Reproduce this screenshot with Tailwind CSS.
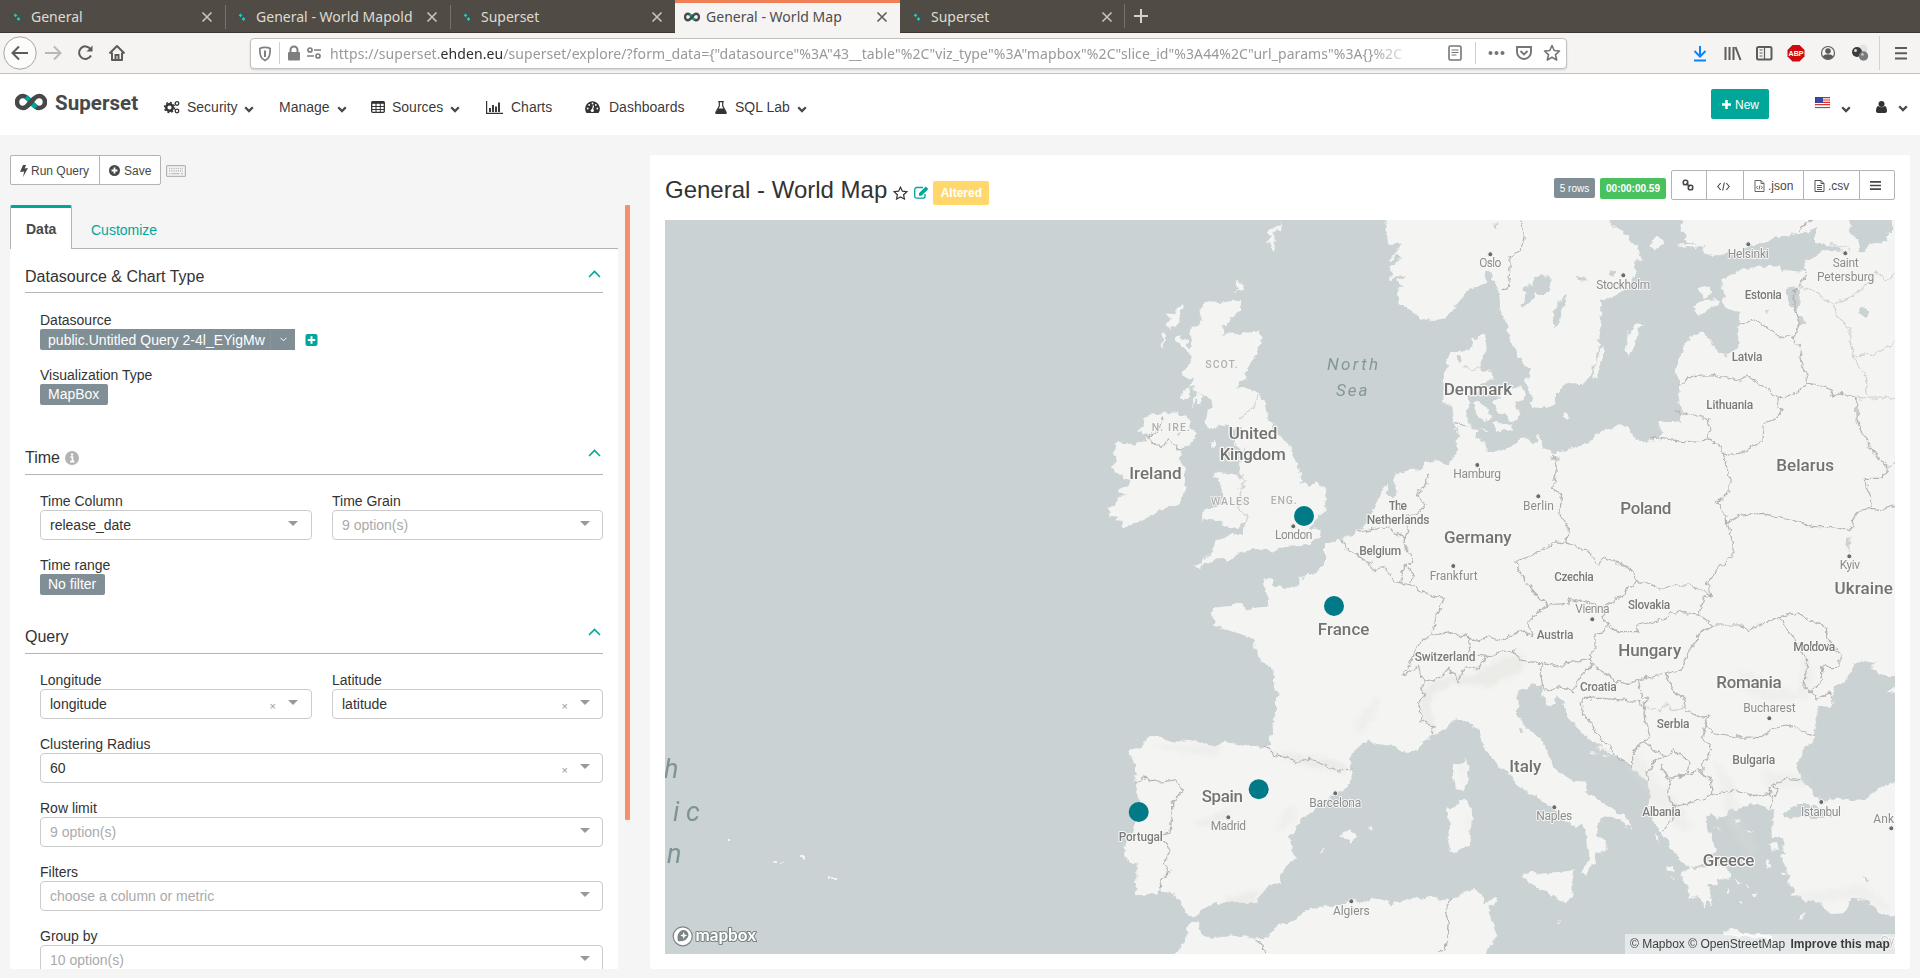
<!DOCTYPE html>
<html lang="en">
<head>
<meta charset="utf-8">
<title>General - World Map</title>
<script src="https://cdn.jsdelivr.net/npm/@tailwindcss/browser@4"></script>
</head>
<body class="w-[1920px] h-[978px] overflow-hidden bg-[#f5f5f5] font-['Liberation_Sans',Arial,sans-serif] text-sm leading-5 text-[#333]">
<svg class="hidden">
  <symbol id="caret" viewBox="0 0 10 7"><path d="M1.2 1.2 5 5 8.8 1.2" fill="none" stroke="#484848" stroke-width="2.3"/></symbol>
  <symbol id="up" viewBox="0 0 13 8"><path d="M1 7 6.5 1.4 12 7" fill="none" stroke="#00a699" stroke-width="1.5"/></symbol>
  <symbol id="close" viewBox="0 0 12 12"><path d="M1.5 1.5l9 9M10.500 1.500l-9 9" stroke="currentColor" stroke-width="1.6"/></symbol>
  <symbol id="fav" viewBox="0 0 16 16"><path d="M5 5.500 11 10.500" stroke="#464a46" stroke-width="3"/><path d="M4.500 5.500a2.500 2.500 0 1 0 0 5M11.500 5.500a2.500 2.500 0 1 1 0 5" fill="none" stroke="#484b48" stroke-width="1.500"/><path d="M5.500 5.300l2 2M8.500 9l2 2" stroke="#17d0c4" stroke-width="2.500"/></symbol>
  <symbol id="inf" viewBox="0 0 32 18"><path d="M16 9C12 4 10.500 3 8 3a6 6 0 0 0 0 12c2.500 0 4-1 8-6s5.500-6 8-6a6 6 0 0 1 0 12c-2.500 0-4-1-8-6z" fill="none" stroke="#484848" stroke-width="4.600"/><path d="M11 4l3.500 3M17.500 11l3.700 3.200" stroke="#00a699" stroke-width="4.800"/><path d="M12.500 12.500 19.500 5" stroke="#484848" stroke-width="4.600"/></symbol>
</svg>

<!-- browser tabs -->
<div class="h-[33px] flex bg-[#504c45] border-b border-[#3a3733] font-['Noto_Sans','Open_Sans',sans-serif] text-sm text-[#dfdbd2]">
  <div class="w-[225px] h-8 flex items-center pl-[9px] pr-[12px] pt-[2px]"><svg class="w-4 h-4"><use href="#fav"/></svg><span class="ml-[6px] flex-1">General</span><svg class="w-3 h-3 text-[#c9c5bd]"><use href="#close"/></svg></div>
  <div class="w-[225px] h-8 flex items-center pl-[9px] pr-[12px] pt-[2px] relative"><span class="w-px h-6 bg-[#77736b] absolute left-0 top-[5px]"></span><svg class="w-4 h-4"><use href="#fav"/></svg><span class="ml-[6px] flex-1 whitespace-nowrap tracking-[0.02px]">General - World Mapold</span><svg class="w-3 h-3 text-[#c9c5bd]"><use href="#close"/></svg></div>
  <div class="w-[225px] h-8 flex items-center pl-[9px] pr-[12px] pt-[2px] relative"><span class="w-px h-6 bg-[#77736b] absolute left-0 top-[5px]"></span><svg class="w-4 h-4"><use href="#fav"/></svg><span class="ml-[6px] flex-1">Superset</span><svg class="w-3 h-3 text-[#c9c5bd]"><use href="#close"/></svg></div>
  <div class="w-[225px] h-[33px] flex items-center pl-[9px] pr-[12px] pb-[2px] bg-[#f5f4f2] border-t-[3px] border-[#ef7f55] text-[#4c4c4c]"><svg class="w-4 h-[10px]" viewBox="0 0 32 18" preserveAspectRatio="none"><use href="#inf" width="32" height="18"/></svg><span class="ml-[6px] flex-1 whitespace-nowrap tracking-[0.02px]">General - World Map</span><svg class="w-3 h-3 text-[#5c5c5c]"><use href="#close"/></svg></div>
  <div class="w-[225px] h-8 flex items-center pl-[9px] pr-[12px] pt-[2px]"><svg class="w-4 h-4"><use href="#fav"/></svg><span class="ml-[6px] flex-1">Superset</span><svg class="w-3 h-3 text-[#c9c5bd]"><use href="#close"/></svg></div>
  <div class="flex items-center h-8"><span class="-ml-px w-px h-6 bg-[#77736b]"></span><svg class="ml-[8px] w-4 h-4" viewBox="0 0 16 16"><path d="M8 1v14M1 8h14" stroke="#d5d1c9" stroke-width="2"/></svg></div>
</div>

<!-- browser toolbar -->
<div class="h-[41px] flex items-center bg-[#f5f4f2] border-b border-[#c4c2c0] pl-[3px] pr-[12px]">
  <svg class="w-[130px] h-[36px] shrink-0" viewBox="3 35 130 36" fill="none" stroke="#5c5c5a" stroke-width="2">
    <circle cx="20" cy="53" r="16.200" fill="#fcfcfb" stroke="#a8a6a4" stroke-width="1"/>
    <path d="M28 53H13M19 46.500 12.500 53l6.500 6.500"/>
    <path stroke="#b9b8b6" d="M45 53h15M54 46.500 60.500 53 54 59.500"/>
    <path d="M90.500 49a6.300 6.300 0 1 0 .5 6.500"/><path d="M92.500 45.500v6h-6z" fill="#5c5c5a" stroke="none"/>
    <path d="M109.500 53.500 117 46l7.500 7.500M112 52.500v7.500h10v-7.500" stroke-linejoin="round"/><path d="M115.500 60v-5h3v5" />
  </svg>
  <div class="ml-[117px] w-[1317px] h-[31px] shrink-0 flex items-center bg-white border border-[#c3c1be] rounded-[4px] shadow-[0_1px_2px_rgba(0,0,0,0.15)]">
    <svg class="w-[72px] h-[29px] shrink-0" viewBox="251 39 72 29" fill="none" stroke="#7f7f7d" stroke-width="1.700">
      <path d="M265 47.300c-2.300 0-4 .5-5.200 1.200 0 6 .5 10 5.200 12 4.700-2 5.200-6 5.200-12-1.200-.7-2.900-1.200-5.200-1.200z"/><path d="M265 50.500v6.500" stroke-width="2"/>
      <path d="M279.500 42v22" stroke="#cfcfcf" stroke-width="1"/>
      <path d="M290.500 53v-3a3.500 3.500 0 0 1 7 0v3" stroke-width="2"/><rect x="288" y="52" width="12" height="8.500" rx="1" fill="#7f7f7d" stroke="none"/>
      <circle cx="310" cy="50" r="2"/><path d="M314 50h7M307 56h7"/><circle cx="318" cy="56" r="2"/>
    </svg>
    <div class="ml-[7px] w-[1085px] overflow-hidden whitespace-nowrap font-['Noto_Sans','Open_Sans',sans-serif] text-[14px] tracking-[0.075px] text-[#999] pt-px [mask-image:linear-gradient(to_right,black_96%,transparent)]">https://superset.<span class="text-[#2e2e2e]">ehden.eu</span>/superset/explore/?form_data={"datasource"%3A"43__table"%2C"viz_type"%3A"mapbox"%2C"slice_id"%3A44%2C"url_params"%3A{}%2C</div>
    <svg class="ml-auto w-[120px] h-[29px] shrink-0" viewBox="1446 39 120 29" fill="none" stroke="#757573" stroke-width="1.600">
      <rect x="1449" y="46" width="12" height="14" rx="1.500"/><path d="M1451.500 50h7M1451.500 52.500h7M1451.500 55h5" stroke-width="1.200"/>
      <path d="M1475.500 42v22" stroke="#cfcfcf" stroke-width="1"/>
      <g fill="#757573" stroke="none"><circle cx="1490.500" cy="53" r="2"/><circle cx="1496.500" cy="53" r="2"/><circle cx="1502.500" cy="53" r="2"/></g>
      <path d="M1517 47h14v5a7 7 0 0 1-14 0zM1520.500 51l3.500 3.500 3.500-3.500" stroke-width="1.900"/>
      <path d="M1552 45.500l2.200 5 5.300.5-4 3.700 1.200 5.300-4.700-2.800-4.700 2.800 1.200-5.300-4-3.700 5.300-.5z" stroke-linejoin="round"/>
    </svg>
  </div>
  <svg class="ml-auto w-[220px] h-[36px] shrink-0" viewBox="1688 35 220 36" fill="none" stroke="#5c5c5a" stroke-width="2">
    <path d="M1700 46v10M1694.500 51l5.500 5.500 5.500-5.500M1694 60.500h12" stroke="#0a84ff"/>
    <path d="M1725.500 47v13M1729.500 47v13M1733.500 47v13M1735.500 47l5 13" stroke-width="2"/>
    <rect x="1757" y="47" width="14.500" height="12.500" rx="1.500"/><path d="M1764.500 47v12M1759.500 50h3M1759.500 53h3M1759.500 56h3" stroke-width="1.200"/>
    <path d="M1792.500 45h7l5 5v6.500l-5 5h-7l-5-5V50z" fill="#d00a0a" stroke="none"/><text x="1788.500" y="56.200" font-family="Liberation Sans" font-weight="700" font-size="8" textLength="15" lengthAdjust="spacingAndGlyphs" fill="#fff" stroke="none">ABP</text>
    <circle cx="1828" cy="53" r="6.500" stroke-width="1.200"/><circle cx="1828" cy="51" r="2.800" fill="#5c5c5a" stroke="none"/><path d="M1823 56.500c1-3 9-3 10 0-2 3.500-8 3.500-10 0z" fill="#5c5c5a" stroke="none"/>
    <g stroke="none"><circle cx="1863" cy="49" r="4.500" fill="#e3e3e3"/><circle cx="1857" cy="52" r="5" fill="#3c3c3c"/><circle cx="1855.500" cy="50.500" r="1.500" fill="#ddd"/><circle cx="1863.500" cy="56" r="4.700" fill="#7b7b7b"/><circle cx="1862.500" cy="54.500" r="1.300" fill="#ccc"/></g>
    <path d="M1879.500 36v34" stroke="#d5d3d0" stroke-width="1"/>
    <path d="M1895 48h12M1895 53.200h12M1895 58.500h12"/>
  </svg>
</div>

<!-- application header -->
<div class="h-[61px] bg-white flex items-start pl-[15px] text-black/80">
  <svg class="mt-[19px] w-[32px] h-[18px]"><use href="#inf"/></svg>
  <span class="ml-[8px] mt-[17px] w-[109px] leading-[24px] text-[20.500px] font-bold text-[#484848] font-['Roboto',sans-serif] tracking-[0.05px]">Superset</span>
  <div class="mt-[23px] flex items-center h-5 flex-1">
    <svg class="w-[16px] h-[14px]" viewBox="0 0 16 14" fill="none" stroke="#333"><circle cx="5.500" cy="7.500" r="3.300" stroke-width="2.400"/><circle cx="5.500" cy="7.500" r="5" stroke-width="1.400" stroke-dasharray="2 1.900"/><circle cx="13" cy="3.500" r="1.800" stroke-width="1.300"/><circle cx="13" cy="11" r="1.800" stroke-width="1.300"/></svg>
    <span class="ml-[7px] w-[57px]">Security</span><svg class="mt-1 w-[10px] h-[7px]"><use href="#caret"/></svg>
    <span class="ml-[25px] w-[58px]">Manage</span><svg class="mt-1 w-[10px] h-[7px]"><use href="#caret"/></svg>
    <svg class="ml-[24px] w-[14px] h-[12px]" viewBox="0 0 14 12" fill="none" stroke="#333"><rect x=".7" y=".7" width="12.600" height="10.600" rx="1" stroke-width="1.300"/><path d="M.5 1.800h13" stroke-width="2"/><path d="M.5 5.500h13M.5 8.500h13M5 2v9M9.300 2v9"/></svg>
    <span class="ml-[7px] w-[58px]">Sources</span><svg class="mt-1 w-[10px] h-[7px]"><use href="#caret"/></svg>
    <svg class="ml-[26px] w-[17px] h-[13px]" viewBox="0 0 17 13"><path d="M.6 0v12.400H17" fill="none" stroke="#333" stroke-width="1.200"/><path d="M4 7v4M7 4v7M10 5.500V11M13 1.500V11" stroke="#333" stroke-width="1.900"/></svg>
    <span class="ml-[8px] w-[74px]">Charts</span>
    <svg class="w-[15px] h-[12px]" viewBox="0 0 15 12"><path d="M1.500 12A7.400 7.400 0 1 1 13.500 12z" fill="#333"/><g fill="#fff"><circle cx="2.700" cy="7.500" r=".9"/><circle cx="4.200" cy="4" r=".9"/><circle cx="7.500" cy="2.500" r=".9"/><circle cx="10.800" cy="4" r=".9"/><circle cx="12.300" cy="7.500" r=".9"/></g><path d="M8.500 4.500 7.500 9" stroke="#fff" stroke-width="1.200"/><circle cx="7.300" cy="9.500" r="1.600" fill="#fff"/></svg>
    <span class="ml-[9px] w-[106px]">Dashboards</span>
    <svg class="w-[12px] h-[13px]" viewBox="0 0 12 13"><path d="M3.200.6h5.600M4.300.6v4.500L.9 11.200c-.3.800 0 1.300.7 1.300h8.800c.7 0 1-.5.7-1.300L7.700 5.100V.6" fill="none" stroke="#333" stroke-width="1.200"/><path d="M3.200 7.500h5.600l2.300 4.500H.9z" fill="#333"/></svg>
    <span class="ml-[8px] w-[62px]">SQL Lab</span><svg class="mt-1 w-[10px] h-[7px]"><use href="#caret"/></svg>
  </div>
  <div class="mt-[15px] w-[58px] h-[30px] rounded-[2px] bg-[#00a699] text-white text-xs flex items-center pl-[11px] pt-px"><svg class="w-[9px] h-[9px] mr-[4px]" viewBox="0 0 9 9"><path d="M4.500 0v9M0 4.500h9" stroke="#fff" stroke-width="2.500"/></svg>New</div>
  <svg class="ml-[46px] mt-[23px] w-[15px] h-[12px]" viewBox="0 0 15 12"><rect width="15" height="12" fill="#fff"/><path d="M0 .7h15M0 3h15M0 5.300h15M0 7.600h15M0 10.500h15" stroke="#d33" stroke-width="1.200"/><rect width="8" height="6" fill="#3b4a9b"/><rect x=".4" y=".4" width="14.200" height="11.200" fill="none" stroke="#0002" stroke-width=".6"/></svg>
  <svg class="ml-[11px] mt-[32px] w-[10px] h-[7px]"><use href="#caret"/></svg>
  <svg class="ml-[25px] mt-[27px] w-[11px] h-[12px]" viewBox="0 0 11 12" fill="#333"><circle cx="5.500" cy="3" r="3"/><path d="M2.300 5C.7 5.300 0 7.500 0 10c0 1.300.8 2 2 2h7c1.200 0 2-.7 2-2 0-2.500-.7-4.700-2.300-5-2 1.700-4.400 1.700-6.400 0z"/></svg>
  <svg class="ml-[11px] mr-[12px] mt-[31px] w-[10px] h-[7px]"><use href="#caret"/></svg>
</div>

<!-- explore workspace -->
<div class="flex h-[843px]">
  <div class="w-[608px] ml-[10px] pt-[20px] flex flex-col h-[834px]">
    <div class="flex items-center h-[30px] shrink-0 text-xs text-[#484848]">
      <div class="flex h-[30px] w-[151px] bg-white border border-[#b3b3b3] rounded-[2px]">
        <div class="w-[89px] border-r border-[#b3b3b3] flex items-center pl-[9px] pt-px"><svg class="w-[8px] h-[12px] mr-[3px]" viewBox="0 0 8 12"><path d="M3 0h3L4.700 3.500 8 3 3 12l1.200-5.500L0 7z" fill="#484848"/></svg>Run Query</div>
        <div class="flex items-center pl-[9px] pt-px"><svg class="w-[11px] h-[11px] mr-[4px]" viewBox="0 0 12 12"><circle cx="6" cy="6" r="6" fill="#484848"/><path d="M6 2.800v6.400M2.800 6h6.400" stroke="#fff" stroke-width="2"/></svg>Save</div>
      </div>
      <svg class="ml-[5px] mt-px w-[20px] h-[12px]" viewBox="0 0 20 12"><rect x=".6" y=".6" width="18.800" height="10.800" rx="1" fill="#f7f7f7" stroke="#b3b3b3" stroke-width="1.200"/><path d="M3 3.500h14M3 6h14" stroke="#bbb" stroke-width="1.300" stroke-dasharray="1.300 .9"/><path d="M3 8.700h1.500M5.500 8.700h8M15 8.700h2" stroke="#bbb" stroke-width="1.300"/></svg>
    </div>
    <div class="mt-[20px] h-[44px] shrink-0 flex">
      <div class="w-[62px] bg-white border-x border-[#b3b3b3] border-t-[3px] border-t-[#00a699] rounded-t-[2px] pl-[15px] pt-[11px] font-bold text-[#484848]">Data</div>
      <div class="flex-1 border-b border-[#b3b3b3] pl-[19px] pt-[15px] text-[#00a699]">Customize</div>
    </div>
    <div class="bg-white flex-1 overflow-hidden px-[15px]">
      <div class="h-[44px] border-b border-[#b3b3b3] flex justify-between pt-[18px] text-base leading-5">Datasource &amp; Chart Type<svg class="mt-[3px] mr-[2px] w-[13px] h-[8px]"><use href="#up"/></svg></div>
      <div class="pl-[15px] pt-[16px]">
        <div class="h-[20px] relative top-px">Datasource</div>
        <div class="flex items-center h-[21px]">
          <div class="h-[21px] w-[255px] bg-[#808e95] text-white flex items-center rounded-l-[2px] pl-[8px]"><span class="w-[223px] border-r border-[#8a979e] tracking-[0.03px]">public.Untitled Query 2-4l_EYigMw</span><svg class="ml-[9px] w-[7px] h-[5px]" viewBox="0 0 7 5"><path d="M.5.8l3 3 3-3" fill="none" stroke="#fff"/></svg></div>
          <svg class="ml-[10px] w-[13px] h-[12px]" viewBox="0 0 12 12"><rect width="12" height="12" rx="2" fill="#00a699"/><path d="M6 2.300v7.400M2.300 6h7.400" stroke="#fff" stroke-width="2"/></svg>
        </div>
        <div class="mt-[14px] h-[20px] relative top-px">Visualization Type</div>
        <div class="h-[21px] w-[68px] bg-[#808e95] text-white rounded-[2px] pl-[8px]">MapBox</div>
      </div>
      <div class="mt-[26px] h-[44px] border-b border-[#b3b3b3] flex pt-[17px] text-base leading-5">Time<svg class="ml-[5px] mt-[3px] w-[14px] h-[14px]" viewBox="0 0 14 14"><circle cx="7" cy="7" r="7" fill="#b3b3b3"/><path d="M5.300 6h2.200v4.500M5 10.700h4.500" stroke="#fff" stroke-width="1.700" fill="none"/><rect x="6" y="2.500" width="2.200" height="2" fill="#fff"/></svg><svg class="ml-auto mt-px mr-[2px] w-[13px] h-[8px]"><use href="#up"/></svg></div>
      <div class="pl-[15px] pt-[15px]">
        <div class="flex gap-[20px]">
          <div class="w-[272px]"><div class="h-[20px] relative top-px">Time Column</div><div class="h-[30px] border border-[#ccc] rounded-[4px] flex items-center justify-between pl-[9px] pr-[13px]">release_date<svg class="w-[10px] h-[5px] mb-[3px]" viewBox="0 0 10 5"><path d="M0 0h10L5 5z" fill="#999"/></svg></div></div>
          <div class="w-[271px]"><div class="h-[20px] relative top-px">Time Grain</div><div class="h-[30px] border border-[#ccc] rounded-[4px] flex items-center justify-between pl-[9px] pr-[12px] text-[#aaa]">9 option(s)<svg class="w-[10px] h-[5px] mb-[3px]" viewBox="0 0 10 5"><path d="M0 0h10L5 5z" fill="#999"/></svg></div></div>
        </div>
        <div class="mt-[14px] h-[20px] relative top-px">Time range</div>
        <div class="h-[21px] w-[65px] bg-[#808e95] text-white rounded-[2px] pl-[8px]">No filter</div>
      </div>
      <div class="mt-[15px] h-[44px] border-b border-[#b3b3b3] flex justify-between pt-[17px] text-base leading-5">Query<svg class="mt-px mr-[2px] w-[13px] h-[8px]"><use href="#up"/></svg></div>
      <div class="pl-[15px] pt-[15px] flex flex-col gap-[14px]">
        <div class="flex gap-[20px]">
          <div class="w-[272px]"><div class="h-[20px] relative top-px">Longitude</div><div class="h-[30px] border border-[#ccc] rounded-[4px] flex items-center pl-[9px] pr-[13px]"><span class="flex-1">longitude</span><span class="text-[11px] text-[#999] mr-[12px] mt-[3px]">×</span><svg class="w-[10px] h-[5px] mb-[3px]" viewBox="0 0 10 5"><path d="M0 0h10L5 5z" fill="#999"/></svg></div></div>
          <div class="w-[271px]"><div class="h-[20px] relative top-px">Latitude</div><div class="h-[30px] border border-[#ccc] rounded-[4px] flex items-center pl-[9px] pr-[12px]"><span class="flex-1">latitude</span><span class="text-[11px] text-[#999] mr-[12px] mt-[3px]">×</span><svg class="w-[10px] h-[5px] mb-[3px]" viewBox="0 0 10 5"><path d="M0 0h10L5 5z" fill="#999"/></svg></div></div>
        </div>
        <div><div class="h-[20px] relative top-px">Clustering Radius</div><div class="h-[30px] border border-[#ccc] rounded-[4px] flex items-center pl-[9px] pr-[12px]"><span class="flex-1">60</span><span class="text-[11px] text-[#999] mr-[12px] mt-[3px]">×</span><svg class="w-[10px] h-[5px] mb-[3px]" viewBox="0 0 10 5"><path d="M0 0h10L5 5z" fill="#999"/></svg></div></div>
        <div><div class="h-[20px] relative top-px">Row limit</div><div class="h-[30px] border border-[#ccc] rounded-[4px] flex items-center justify-between pl-[9px] pr-[12px] text-[#aaa]">9 option(s)<svg class="w-[10px] h-[5px] mb-[3px]" viewBox="0 0 10 5"><path d="M0 0h10L5 5z" fill="#999"/></svg></div></div>
        <div><div class="h-[20px] relative top-px">Filters</div><div class="h-[30px] border border-[#ccc] rounded-[4px] flex items-center justify-between pl-[9px] pr-[12px] text-[#aaa]">choose a column or metric<svg class="w-[10px] h-[5px] mb-[3px]" viewBox="0 0 10 5"><path d="M0 0h10L5 5z" fill="#999"/></svg></div></div>
        <div><div class="h-[20px] relative top-px">Group by</div><div class="h-[30px] border border-[#ccc] rounded-[4px] flex items-center justify-between pl-[9px] pr-[12px] text-[#aaa]">10 option(s)<svg class="w-[10px] h-[5px] mb-[3px]" viewBox="0 0 10 5"><path d="M0 0h10L5 5z" fill="#999"/></svg></div></div>
      </div>
    </div>
  </div>
  <div class="ml-[7px] mt-[70px] w-[5px] h-[615px] bg-[#f5916a] rounded-[1px]"></div>

  <!-- chart panel -->
  <div class="ml-[20px] mt-[20px] w-[1260px] h-[814px] bg-white rounded-[2px] px-[15px]">
    <div class="h-[65px] flex items-start">
      <h1 class="mt-[20px] text-[24px] leading-[30px]">General - World Map</h1>
      <svg class="ml-[6px] mt-[31px] w-[15px] h-[14px]" viewBox="0 0 15 14"><path d="M7.500 1.200l1.900 4 4.400.5-3.200 3 .8 4.300-3.900-2.100L3.600 13l.8-4.300-3.200-3 4.400-.5z" fill="none" stroke="#333" stroke-width="1.200"/></svg>
      <svg class="ml-[6px] mt-[31px] w-[15px] h-[13px]" viewBox="0 0 15 13"><path d="M11 8v2.200a2 2 0 0 1-2 2H2.700a2 2 0 0 1-2-2V3.500a2 2 0 0 1 2-2H9" fill="none" stroke="#00a699" stroke-width="1.300"/><path d="M5 7.200 11.800.5l2.500 2.500L7.500 9.700H5z" fill="#00a699"/></svg>
      <span class="ml-[4px] mt-[26px] w-[56px] h-[24px] rounded-[2px] bg-[#ffd76b] text-white text-xs leading-[25px] font-bold text-center">Altered</span>
      <span class="ml-auto mt-[23px] w-[41px] h-[20px] rounded-[2px] bg-[#808e95] text-white text-[10px] text-center leading-[21px]">5 rows</span>
      <span class="ml-[5px] mt-[23px] w-[66px] h-[21px] rounded-[2px] bg-[#4ac15f] text-white text-[10px] font-bold text-center leading-[21px]">00:00:00.59</span>
      <div class="ml-[5px] mt-[15px] h-[30px] w-[224px] border border-[#b3b3b3] rounded-[2px] flex text-xs text-[#484848] divide-x divide-[#b3b3b3]">
        <div class="w-[35px] flex items-center justify-center pr-[3px]"><svg class="w-[12px] h-[12px]" viewBox="0 0 12 12" fill="none" stroke="#484848" stroke-width="1.600"><rect x="1.300" y="1.300" width="4.400" height="4.400" rx="1.800"/><rect x="6.300" y="6.300" width="4.400" height="4.400" rx="1.800"/><path d="M4.200 4.200l3.600 3.600"/></svg></div>
        <div class="w-[37px] flex items-center justify-center pr-[4px] pt-[2px]"><svg class="w-[13px] h-[9px]" viewBox="0 0 13 9" fill="none" stroke="#484848" stroke-width="1.100"><path d="M3.700 1 .8 4.500l2.900 3.500M9.300 1l2.900 3.500L9.300 8M7.300.5 5.700 8.500"/></svg></div>
        <div class="w-[60px] flex items-center pl-[10px] pt-px"><svg class="w-[11px] h-[12px] mr-[3px]" viewBox="0 0 10 12" fill="none" stroke="#666"><path d="M.5.5h6l3 3v8h-9zM6.500.5v3h3M3.300 6 2 7.500 3.300 9M6.700 6 8 7.500 6.700 9M5.300 5.500l-.7 4"/></svg>.json</div>
        <div class="w-[56px] flex items-center pl-[10px] pt-px"><svg class="w-[11px] h-[12px] mr-[3px]" viewBox="0 0 10 12" fill="none" stroke="#555"><path d="M.5.5h6l3 3v8h-9zM6.500.5v3h3M2.500 5.500h5M2.500 7.500h5M2.500 9.500h5"/></svg>.csv</div>
        <div class="flex-1 flex items-center pl-[10px] pt-px"><svg class="w-[11px] h-[9px]" viewBox="0 0 11 9"><path d="M0 .9h11M0 4.500h11M0 8.100h11" stroke="#484848" stroke-width="1.600"/></svg></div>
      </div>
    </div>
    <div class="relative w-[1230px] h-[734px] overflow-hidden bg-[#cad2d3]">
      <svg class="block w-[1230px] h-[734px]" viewBox="665 220 1230 734" font-family="Roboto, 'Noto Sans', sans-serif">
        <defs>
          <filter id="rough" filterUnits="userSpaceOnUse" x="655" y="210" width="1260" height="760"><feTurbulence type="fractalNoise" baseFrequency="0.14" numOctaves="3" seed="4" result="n"/><feDisplacementMap in="SourceGraphic" in2="n" scale="7" xChannelSelector="R" yChannelSelector="G"/></filter>
          <filter id="soft" x="-20%" y="-20%" width="140%" height="140%"><feGaussianBlur stdDeviation="8"/></filter>
        </defs>
        <g filter="url(#rough)">
        <!-- land -->
        <g fill="#f4f4f2">
          <g transform="translate(1080 215) scale(.33333)">
            <path d="M603 20 597 45 583 52 585 75 578 115 573 85 558 78 575 65 563 45 580 40zM470 200 480 205 482 198 492 215 488 228 465 232 475 218 467 213zM308 270 304 300 295 325 270 342 262 330 272 315 262 305 263 295 280 298 290 280zM243 357 256 355 254 375 249 405 246 375zM285 375 300 357 302 370 315 372 322 388 335 400 326 412 305 392zM300 545 322 520 332 515 326 540 310 555zM335 580 340 550 352 535 365 540 368 565 355 568 350 550zM390 695 408 672 408 685 398 700z"/>
            <path d="M370 265 385 262 410 265 480 255 480 285 465 300 445 325 428 330 430 355 425 362 460 355 540 350 548 365 545 385 530 410 525 430 505 455 490 480 500 492 478 500 468 522 485 515 505 518 530 530 550 555 560 575 565 610 578 640 600 660 615 680 635 695 640 720 650 745 660 775 665 800 655 810 680 808 710 806 735 820 741 850 735 880 720 905 700 925 685 935 705 942 722 948 720 965 700 975 690 988 650 995 600 995 580 1010 560 1005 545 1000 510 1005 470 1018 455 1035 445 1042 430 1032 395 1035 385 1040 370 1050 360 1063 340 1053 365 1045 375 1030 395 1010 405 985 425 965 455 960 485 960 490 940 500 925 480 928 460 942 435 930 420 915 390 912 365 920 370 905 370 890 395 882 420 865 430 845 425 820 415 795 400 785 400 770 420 772 450 775 475 780 490 790 485 770 480 745 487 720 500 700 485 710 465 690 465 680 475 660 490 645 480 635 460 640 445 625 430 632 405 640 385 640 372 630 368 620 380 600 395 580 393 560 375 540 355 535 345 530 340 510 330 515 342 490 320 487 308 480 305 470 325 450 335 430 330 415 320 405 335 395 330 370 335 335 355 330 365 320 358 300 365 285z"/>
            <path d="M190 610 215 598 240 600 250 585 270 595 300 597 318 600 328 620 335 645 348 655 345 675 325 690 305 700 305 720 300 735 315 760 315 800 312 840 300 865 298 870 270 873 240 885 215 900 205 908 185 918 165 925 140 932 120 935 128 918 105 915 115 905 85 902 95 888 80 875 105 872 115 850 135 845 118 830 115 822 145 812 155 795 135 790 110 775 97 755 110 742 110 722 96 712 112 700 105 690 112 680 140 685 155 695 180 682 200 678 205 662 180 650 175 640 190 635 195 620z"/>
            <path d="M915 -10 920 80 935 90 950 85 965 90 955 105 945 120 925 130 928 140 960 120 962 128 945 145 935 160 930 195 945 190 960 178 975 182 955 195 965 210 975 215 950 220 948 240 960 265 985 285 1010 300 1015 310 1060 318 1090 310 1125 280 1150 245 1175 225 1200 212 1218 200 1215 170 1230 165 1235 190 1252 210 1258 245 1266 285 1266 -10z"/>
            <path d="M1120 412 1150 410 1170 400 1180 375 1215 355 1222 400 1205 420 1205 465 1225 470 1240 470 1240 490 1210 500 1200 520 1190 535 1165 545 1170 570 1160 590 1170 620 1175 640 1190 645 1185 665 1215 680 1225 700 1215 712 1266 710 1266 1175 565 1175 560 1130 550 1110 548 1090 575 1090 580 1108 595 1115 625 1122 655 1120 655 1090 710 1070 735 1050 735 988 790 970 815 960 830 945 850 940 860 920 870 900 885 880 895 850 905 815 925 812 918 830 925 845 950 835 945 815 943 790 950 775 990 765 1030 762 1035 745 1045 738 1085 740 1105 755 1110 735 1130 715 1140 700 1125 690 1135 670 1130 640 1120 625 1118 575 1090 565 1092 470 1105 455 1097 450 1100 430z"/>
            <path d="M1175 565 1190 560 1210 570 1232 590 1230 610 1215 620 1190 605zM1240 560 1266 545 1266 598 1248 590zM1195 640 1225 650 1215 655zM1240 625 1266 622 1266 655 1250 650z"/>
          </g>
          <g transform="translate(1500 215) scale(.33333)">
            <path d="M-4 -10 0 285 20 330 35 380 60 430 90 465 90 485 75 495 85 520 95 550 90 565 105 580 150 575 160 570 165 545 185 512 210 505 250 508 265 495 285 440 295 400 300 350 305 290 300 255 320 250 350 235 390 220 395 195 410 170 400 145 425 135 415 100 395 85 385 60 345 40 330 30 325 -10z"/>
            <path d="M313 390 315 410 300 450 290 490 280 488 285 450 300 410zM430 325 415 345 410 370 395 400 385 425 378 410 380 365 400 335zM455 85 470 65 490 75 493 90 475 103 455 95zM530 90 560 85 590 90 585 100zM595 225 610 215 620 220 637 215 635 232 615 250zM580 275 600 260 650 252 660 262 635 280 605 300 590 298zM190 595 205 595 210 610 195 612zM-4 510 40 520 60 510 72 520 75 555 50 560 45 580 62 590 55 615 30 622 20 600 -4 595zM-4 620 30 630 40 628 35 645 -4 650z"/>
            <path d="M548 -10 545 45 560 60 550 75 580 85 610 100 615 115 650 125 690 115 720 110 750 95 790 85 815 70 870 60 910 55 945 40 945 80 990 90 1010 95 1035 110 1000 105 985 108 960 110 940 130 920 132 915 160 910 170 850 165 840 155 790 152 750 158 720 165 690 180 665 195 665 215 675 245 665 260 680 285 720 290 715 330 715 395 700 410 680 425 655 410 645 390 620 365 605 350 580 360 555 385 550 415 535 435 530 480 540 500 535 540 543 590 540 610 545 620 475 622 478 640 490 645 485 655 465 675 440 682 410 675 400 665 390 635 360 630 320 645 290 658 270 680 240 690 200 705 165 715 150 705 130 700 125 680 110 655 115 680 100 685 80 670 60 672 40 690 20 700 -6 710 -6 1180 1215 1180 1215 -10z"/>
          </g>
          <g transform="translate(1080 590) scale(.33333)">
            <path d="M562 -10 565 50 540 52 500 58 485 40 465 38 455 48 410 52 392 62 395 80 410 92 398 103 430 118 490 135 515 145 530 175 535 200 580 240 588 265 583 300 600 310 585 320 585 370 578 400 570 465 555 470 540 470 500 465 480 462 440 458 400 465 360 458 330 450 310 455 260 452 240 440 215 438 195 452 190 468 150 480 145 490 155 510 165 520 165 555 170 600 175 640 165 700 150 740 140 760 135 800 150 818 170 820 168 880 165 912 205 912 220 917 240 905 275 908 300 930 315 965 345 983 355 975 365 958 400 945 430 938 490 938 530 935 545 910 575 882 602 878 605 855 620 825 655 800 635 785 630 740 650 710 690 665 720 650 735 635 760 612 790 600 815 575 820 550 810 530 812 490 830 475 865 452 890 462 940 468 960 482 990 487 1010 480 1025 462 1050 440 1090 420 1110 395 1130 388 1160 395 1180 412 1200 418 1210 450 1215 485 1235 500 1266 540 1266 -10z"/>
            <path d="M1160 497 1160 530 1166 560 1158 590 1145 608 1125 590 1120 565 1117 545 1120 525 1155 515zM1095 655 1120 655 1150 625 1165 635 1178 670 1172 720 1167 770 1150 768 1130 785 1110 782 1103 745 1110 720 1108 690 1100 670zM780 738 810 718 832 740 815 758zM860 712 880 712 875 720zM718 785 730 777 728 787z"/>
            <path d="M280 1110 315 1050 325 1000 355 995 355 1015 380 1040 430 1040 485 1038 520 1045 550 1045 575 1030 590 1005 630 998 650 985 680 960 720 950 780 945 815 930 850 935 880 925 920 930 935 943 975 930 1000 920 1020 930 1050 920 1085 930 1115 928 1140 910 1180 898 1200 910 1210 925 1215 945 1247 918 1245 938 1225 950 1230 975 1250 1030 1235 1065 1210 1110z"/>
          </g>
          <g transform="translate(1500 590) scale(.33333)">
            <path d="M-6 530 25 545 50 580 75 605 120 620 130 640 165 650 190 690 230 710 250 705 260 740 268 790 265 810 240 850 262 855 285 810 290 790 320 785 318 750 285 735 290 700 315 680 345 680 375 700 390 720 388 690 350 665 320 645 255 605 265 575 215 572 170 540 150 510 140 470 120 445 75 410 50 370 60 350 48 320 60 300 100 285 130 285 125 305 145 350 160 335 170 315 185 325 195 360 210 390 245 430 290 460 340 495 390 530 410 545 440 575 450 600 445 660 465 700 480 725 500 750 510 775 535 800 540 815 570 830 540 860 565 885 570 930 590 915 605 925 610 950 625 930 640 950 630 905 620 885 650 885 655 870 690 865 690 845 650 825 630 825 610 800 650 780 640 760 615 700 630 665 650 690 680 680 685 660 720 655 750 640 800 650 805 662 830 658 815 690 815 740 850 745 850 780 860 790 840 800 860 840 870 855 865 880 885 900 875 915 905 920 910 935 945 930 965 940 975 960 1000 972 1030 970 1050 930 1085 925 1115 945 1140 970 1215 990 1215 570 1150 590 1125 605 1095 630 1060 632 1000 625 970 635 940 610 915 580 885 530 905 505 910 470 940 455 943 430 945 400 955 375 960 345 995 355 1000 325 1000 290 1030 275 1055 245 1060 220 1100 213 1130 215 1110 225 1120 240 1150 255 1215 255 1215 -10 -6 -10z"/>
            <path d="M68 850 90 845 130 850 170 850 225 838 215 880 215 920 200 940 170 925 140 905 85 878 68 865zM670 1020 700 1018 740 1030 810 1035 815 1048 760 1045 680 1035zM900 980 915 962 905 990 897 988zM800 765 830 758 840 780 815 778zM798 810 810 815 805 838 798 830zM840 845 860 845 855 855zM460 728 475 740 485 755 470 748zM500 825 515 825 520 845 503 840zM512 858 525 868 518 870zM1160 305 1184 290 1215 290 1215 312zM700 865 725 875 718 880zM735 880 745 890 737 895zM755 910 775 908 765 922zM715 930 728 932 720 942zM680 900 690 905 683 912zM635 710 665 720 650 712zM705 690 720 695 710 702zM740 720 755 725 745 728zM265 485 300 490 270 492zM290 470 320 478 300 480zM305 495 335 497 310 500zM172 990 180 995 173 998z"/>
          </g>
          <path d="M728 838h2v3h-2zM774 860h3v2h-3zM779 861l4 1 1 2-5-1zM800 856h4v2h-4zM828 876l4 2h7l-4 2-7-1z"/>
        </g>
        <!-- lakes and inland sea -->
        <g fill="#cad2d3">
          <path transform="translate(1080 215) scale(.33333)" d="M1130 420 1145 420 1148 440 1135 445zM930 835 945 830 950 840 935 850zM288 655 300 652 300 662 290 662zM1240 25 1252 22 1255 38 1245 35z"/>
          <path transform="translate(1500 215) scale(.33333)" d="M105 185 120 180 150 182 152 200 145 230 125 240 105 230 100 255 80 265 60 280 70 255 80 235 70 220 80 210 95 215zM200 240 198 260 185 290 175 320 160 340 158 310 165 285 185 250zM225 185 260 188 245 200zM330 165 345 170 345 185 330 180zM1047 -10 1050 50 1075 80 1078 115 1095 115 1105 90 1140 85 1165 75 1160 55 1180 45 1170 -10zM855 220 875 215 900 222 898 270 885 290 870 265zM885 300 915 310 918 328 900 332zM1075 285 1090 275 1110 290 1095 305 1075 300zM1045 965 1052 965 1048 1008 1040 1000zM797 285 805 280 810 290 803 298zM150 722 180 725 178 738 155 735z"/>
          <path transform="translate(1500 590) scale(.33333)" d="M840 675 862 662 885 645 930 645 960 652 990 668 1000 680 950 685 900 682 860 684zM1092 855 1110 868 1105 875 1095 868zM60 415 68 418 66 426 60 425zM575 830 625 822 620 832 580 838z"/>
        </g>
        <!-- terrain shading -->
        <g fill="#dededb" opacity=".55" transform="translate(1080 590) scale(.33333)">
          <g filter="url(#soft)"><path opacity=".8" d="M1035 290 1100 260 1180 255 1260 205 1330 190 1330 240 1230 290 1120 280 1060 310 1050 370 1070 420 1040 400 1020 340zM600 485 760 510 810 530 800 545 700 535 620 510zM330 700 400 680 450 655 440 680 380 705zM430 925 520 905 550 890 520 935 440 938z"/><path opacity=".45" d="M820 400 900 310 890 370 840 440zM600 670 650 640 640 700 590 730zM200 465 430 462 410 500 260 480zM1135 530 1155 525 1150 595zM1160 660 1170 700 1155 740zM1660 470 1720 560 1800 640 1840 720 1800 720 1720 640 1640 540zM1980 240 2060 270 2150 310 2160 270 2170 180 2140 120 2200 250 2180 320 2080 340 1990 300zM1900 500 1960 580 1980 680 2040 780 2000 800 1940 700zM2040 540 2180 560 2200 590 2060 590zM2140 910 2260 900 2350 880 2430 950 2430 970 2330 920 2200 940z"/></g>
        </g>
        <!-- borders -->
        <g fill="none" stroke="#b4b4b2" stroke-width="3.600" stroke-linejoin="round">
          <g transform="translate(1080 215) scale(.33333)">
            <path stroke="#d2d2d0" d="M535 540 525 570 505 590 480 615M475 780 495 800 480 820 485 845 478 880 502 905 495 940M1150 455 1180 465 1203 455"/>
            <path d="M250 607 240 640 205 665 225 690 250 700 262 672 285 690 290 705 305 700M1118 625 1160 633M1040 778 1040 810 1012 840 1033 870 1010 900 980 900 985 935 975 970M830 950 880 940 930 940 975 970 965 985 990 1015 995 1040 975 1050 960 1075 970 1105 995 1110M785 972 795 1000 830 1020 870 1045 880 1065 910 1055 945 1100 970 1105M975 1050 1000 1080 995 1105M995 1110 1030 1135 1095 1148"/>
          </g>
          <g transform="translate(1080 590) scale(.33333)">
            <path d="M1095 22 1070 65 1058 135 1025 150 1000 200 970 255 1015 232 1030 275 1080 265 1105 235 1135 275 1155 230 1200 240 1215 200M1058 135 1110 128 1165 140 1170 190M1165 140 1200 155 1225 140 1260 150M1190 195 1230 200 1260 190M1030 275 1025 295 1035 320 1010 335 1025 360 1022 390 1065 410 1055 435M555 465 580 490 650 515 690 505 730 525 775 540 822 537M165 575 200 558 210 578 250 575 290 570 310 600 275 635 275 680 270 730 245 735 255 760 270 780 250 820 270 842 240 875 243 908M525 1048 550 1070 552 1100M1115 925 1095 955 1105 1000 1095 1080 1075 1091"/>
          </g>
          <g transform="translate(1500 215) scale(.33333)">
            <path d="M60 0 73 60 65 100 30 125 30 160 25 220 10 225M935 8 898 48M915 165 920 180 877 238 885 290 898 330 877 368M715 333 765 312 830 362 877 368 905 400 900 430 925 500M535 512 570 485 640 482 720 495 742 480 790 515 835 550 890 535 925 500M835 550 830 580 848 588 830 605 790 630 785 680 740 705 720 715 667 718M525 590 570 600 625 615 632 635 622 670 665 695 667 718M455 667 550 680 630 675M667 718 690 790 690 825 650 865 675 890 680 920 700 985 698 1020 660 1055 620 1105 632 1140M925 500 990 525 1000 545 1025 532 1070 555 1072 620 1090 660 1125 720 1168 760 1145 790 1095 790 1110 840 1115 880 1145 885 1200 865M680 925 720 900 790 895 880 915 940 935 1000 935 1050 950 1055 915 1080 885 1115 880M160 718 172 770 158 815 185 840 180 890 205 940 200 985 165 980 100 1020 45 1040 75 1100 140 1170M200 985 260 1005 295 1050 310 1030 380 1050 410 1100 375 1130M410 1100 450 1105 480 1125 530 1110 570 1110 632 1140"/>
            <path stroke="#d2d2d0" d="M900 215 940 225 1000 270 1010 300 1050 340 1050 380 1060 425 1100 490 1100 540M1060 425 1130 415 1200 375M1072 548 1200 550M1000 270 1060 240 1110 200 1130 170 1155 200 1200 165M990 85 1050 105M1168 760 1200 730"/>
          </g>
          <g transform="translate(1500 590) scale(.33333)">
            <path d="M95 0 140 45 200 40 210 25 250 35 300 45 320 48 370 15 378 0M140 45 85 95 97 140 65 125 -3 150M300 45 318 100 315 125 285 130 285 180 265 210M318 100 350 125 410 125 415 105 490 90 510 65 595 72M632 15 610 20 595 72 640 105 720 105 745 125 780 105 840 80 885 150 920 210 915 290 935 310M840 80 895 68 935 95 980 110 980 150 1020 195 1020 230 965 230 965 265 935 305 950 325 990 305 1000 325M640 105 600 130 570 180 540 240 495 252 415 270 385 283 340 270 275 220M275 220 265 210 200 215 185 230 130 220 60 210 45 180 -3 190M130 220 118 240 130 290 135 305 180 290 220 305 240 260 275 222M425 350 420 335 310 325 245 325 250 370 300 440 350 500 395 530 395 495 425 455M495 252 530 310 555 330 560 365 600 380 625 375 615 400 640 428 700 440 780 443 820 415 865 405 900 420 943 436M415 270 425 320 445 325 430 350 435 390 450 430 440 455 425 455 495 500 460 520 440 550 443 575M495 500 520 478 570 520 565 545 515 565 485 535M480 525 510 570 505 620 520 650 550 645 600 630 635 615 635 575 600 542 515 565M620 400 607 440 638 480 610 520 605 542M635 615 710 600 765 620 800 612 815 615 810 590 860 565 910 570M820 590 835 600 820 625 810 658M520 650 515 690 480 735"/>
            <path stroke="#d2d2d0" d="M430 350 480 365 500 338 520 365 560 350"/>
          </g>
        </g>
        </g>
        <!-- city dots -->
        <g fill="#6a6a6a" stroke="#f8f8f7" stroke-width="1">
          <circle cx="1490.300" cy="254.300" r="2.500"/><circle cx="1293.300" cy="526.300" r="2.500"/><circle cx="1477.300" cy="465" r="2.500"/><circle cx="1453.300" cy="566" r="2.500"/><circle cx="1623.300" cy="275.300" r="2.500"/><circle cx="1748.300" cy="244.300" r="2.500"/><circle cx="1845.300" cy="253.300" r="2.500"/><circle cx="1538.300" cy="496.300" r="2.500"/><circle cx="1849.300" cy="556.300" r="2.500"/><circle cx="1592.300" cy="619.300" r="2.500"/><circle cx="1769.300" cy="718.300" r="2.500"/><circle cx="1821.300" cy="802" r="2.500"/><circle cx="1891.300" cy="828.300" r="2.500"/><circle cx="1554.300" cy="807.300" r="2.500"/><circle cx="1335.300" cy="793.300" r="2.500"/><circle cx="1228.300" cy="817.300" r="2.500"/><circle cx="1351.300" cy="901.300" r="2.500"/>
        </g>
        <!-- country names -->
        <g fill="#737373" stroke="#f7f7f6" stroke-width="2.500" paint-order="stroke" stroke-linejoin="round" font-weight="500" font-size="17">
          <text x="1228.700" y="439.300" textLength="48.700">United</text><text x="1219.700" y="460.300" textLength="66">Kingdom</text><text x="1129.300" y="478.500" textLength="52.300">Ireland</text><text x="1443.700" y="395" textLength="68.500">Denmark</text><text x="1444" y="543" textLength="67.700">Germany</text><text x="1620.300" y="514" textLength="51">Poland</text><text x="1776.300" y="471" textLength="57.700">Belarus</text><text x="1834.500" y="594" textLength="58.300">Ukraine</text><text x="1317.700" y="635.300" textLength="51.700">France</text><text x="1201.700" y="802" textLength="41.300">Spain</text><text x="1509.300" y="772.300" textLength="32">Italy</text><text x="1618.300" y="656.300" textLength="63">Hungary</text><text x="1716.300" y="688" textLength="65.300">Romania</text><text x="1702.700" y="866" textLength="51.700">Greece</text>
        </g>
        <g fill="#7a7a7a" stroke="#f7f7f6" stroke-width="2" paint-order="stroke" stroke-linejoin="round" font-weight="500" font-size="12">
          <text x="1388.700" y="509.500" textLength="18.300">The</text><text x="1366.700" y="524" textLength="62.700">Netherlands</text><text x="1359.300" y="555.300" textLength="42">Belgium</text><text x="1414.700" y="661" textLength="60.700">Switzerland</text><text x="1118.700" y="840.700" textLength="44">Portugal</text><text x="1744.700" y="299" textLength="37">Estonia</text><text x="1731.700" y="361" textLength="30.700">Latvia</text><text x="1706.300" y="409" textLength="47">Lithuania</text><text x="1554.300" y="581" textLength="39.300">Czechia</text><text x="1628" y="609.300" textLength="42.300">Slovakia</text><text x="1536.700" y="639.300" textLength="36.700">Austria</text><text x="1580" y="691" textLength="36.700">Croatia</text><text x="1793.300" y="650.700" textLength="42">Moldova</text><text x="1656.700" y="727.700" textLength="32.700">Serbia</text><text x="1732.300" y="764.300" textLength="43">Bulgaria</text><text x="1642.300" y="816" textLength="38.300">Albania</text>
        </g>
        <!-- city names -->
        <g fill="#8d8d8d" stroke="#f7f7f6" stroke-width="1.800" paint-order="stroke" stroke-linejoin="round" font-size="12">
          <text x="1479.300" y="267.300" textLength="22">Oslo</text><text x="1275" y="539" textLength="37.300">London</text><text x="1453.300" y="478.300" textLength="47.700">Hamburg</text><text x="1429.700" y="579.700" textLength="48">Frankfurt</text><text x="1596.300" y="288.700" textLength="54">Stockholm</text><text x="1727.700" y="258" textLength="41">Helsinki</text><text x="1832.700" y="266.700" textLength="26">Saint</text><text x="1817" y="281" textLength="57.300">Petersburg</text><text x="1523" y="509.700" textLength="31">Berlin</text><text x="1839.700" y="569.300" textLength="20.300">Kyiv</text><text x="1575.300" y="613" textLength="34.300">Vienna</text><text x="1743.300" y="712" textLength="52.300">Bucharest</text><text x="1801" y="816" textLength="40">Istanbul</text><text x="1873.300" y="822.700" textLength="38">Ankara</text><text x="1536.300" y="820" textLength="36">Naples</text><text x="1309.300" y="807" textLength="52">Barcelona</text><text x="1210.700" y="830" textLength="35.300">Madrid</text><text x="1333" y="915" textLength="36.700">Algiers</text><text x="1880.700" y="945" textLength="38">Cyprus</text>
        </g>
        <g fill="#b0b0b0" stroke="#f7f7f6" stroke-width="1.500" paint-order="stroke" font-weight="500" font-size="10.500">
          <text x="1205.300" y="367.700" textLength="32.300">SCOT.</text><text x="1151.700" y="431" textLength="38.300">N. IRE.</text><text x="1211" y="505" textLength="38.300">WALES</text><text x="1270.700" y="503.700" textLength="26">ENG.</text>
        </g>
        <g fill="#84979a" font-style="italic" font-size="17">
          <text x="1327" y="369.700" textLength="51">North</text><text x="1336" y="395.700" textLength="31.500">Sea</text>
        </g>
        <g fill="#7e9396" font-style="italic" font-size="27"><text x="664" y="778">h</text><text x="656" y="821">t</text><text x="673" y="821">i</text><text x="686" y="821">c</text><text x="667" y="863">n</text></g>
        <!-- data points -->
        <g fill="#007a87"><circle cx="1304" cy="516" r="10"/><circle cx="1334" cy="606" r="10"/><circle cx="1258.700" cy="789.300" r="10"/><circle cx="1138.700" cy="812" r="10"/></g>
        <!-- mapbox wordmark -->
        <circle cx="682.700" cy="936.300" r="9.500" fill="#fff" stroke="#7b8586" stroke-width="1.200"/><path d="M678 941c-1-4-.5-7 1.500-9a5 5 0 1 1 7 7c-2 2-5 2.700-8.500 2z" fill="#7b8586"/><path d="M683.700 932l1 2.500 2.500 1-2.500 1-1 2.500-1-2.500-2.500-1 2.500-1z" fill="#fff"/>
        <text x="695.500" y="941" textLength="60.500" font-family="Lato, sans-serif" font-weight="700" font-size="17" fill="#fff" stroke="#7b8586" stroke-width="2.200" paint-order="stroke" stroke-linejoin="round">mapbox</text>
      </svg>
      <div class="absolute right-0 bottom-0 h-[20px] w-[270px] bg-white/50 pl-[5px] text-xs leading-5 text-black/75 whitespace-nowrap">© Mapbox © OpenStreetMap <b class="ml-[2px]">Improve this map</b></div>
    </div>
  </div>
</div>
</body>
</html>
